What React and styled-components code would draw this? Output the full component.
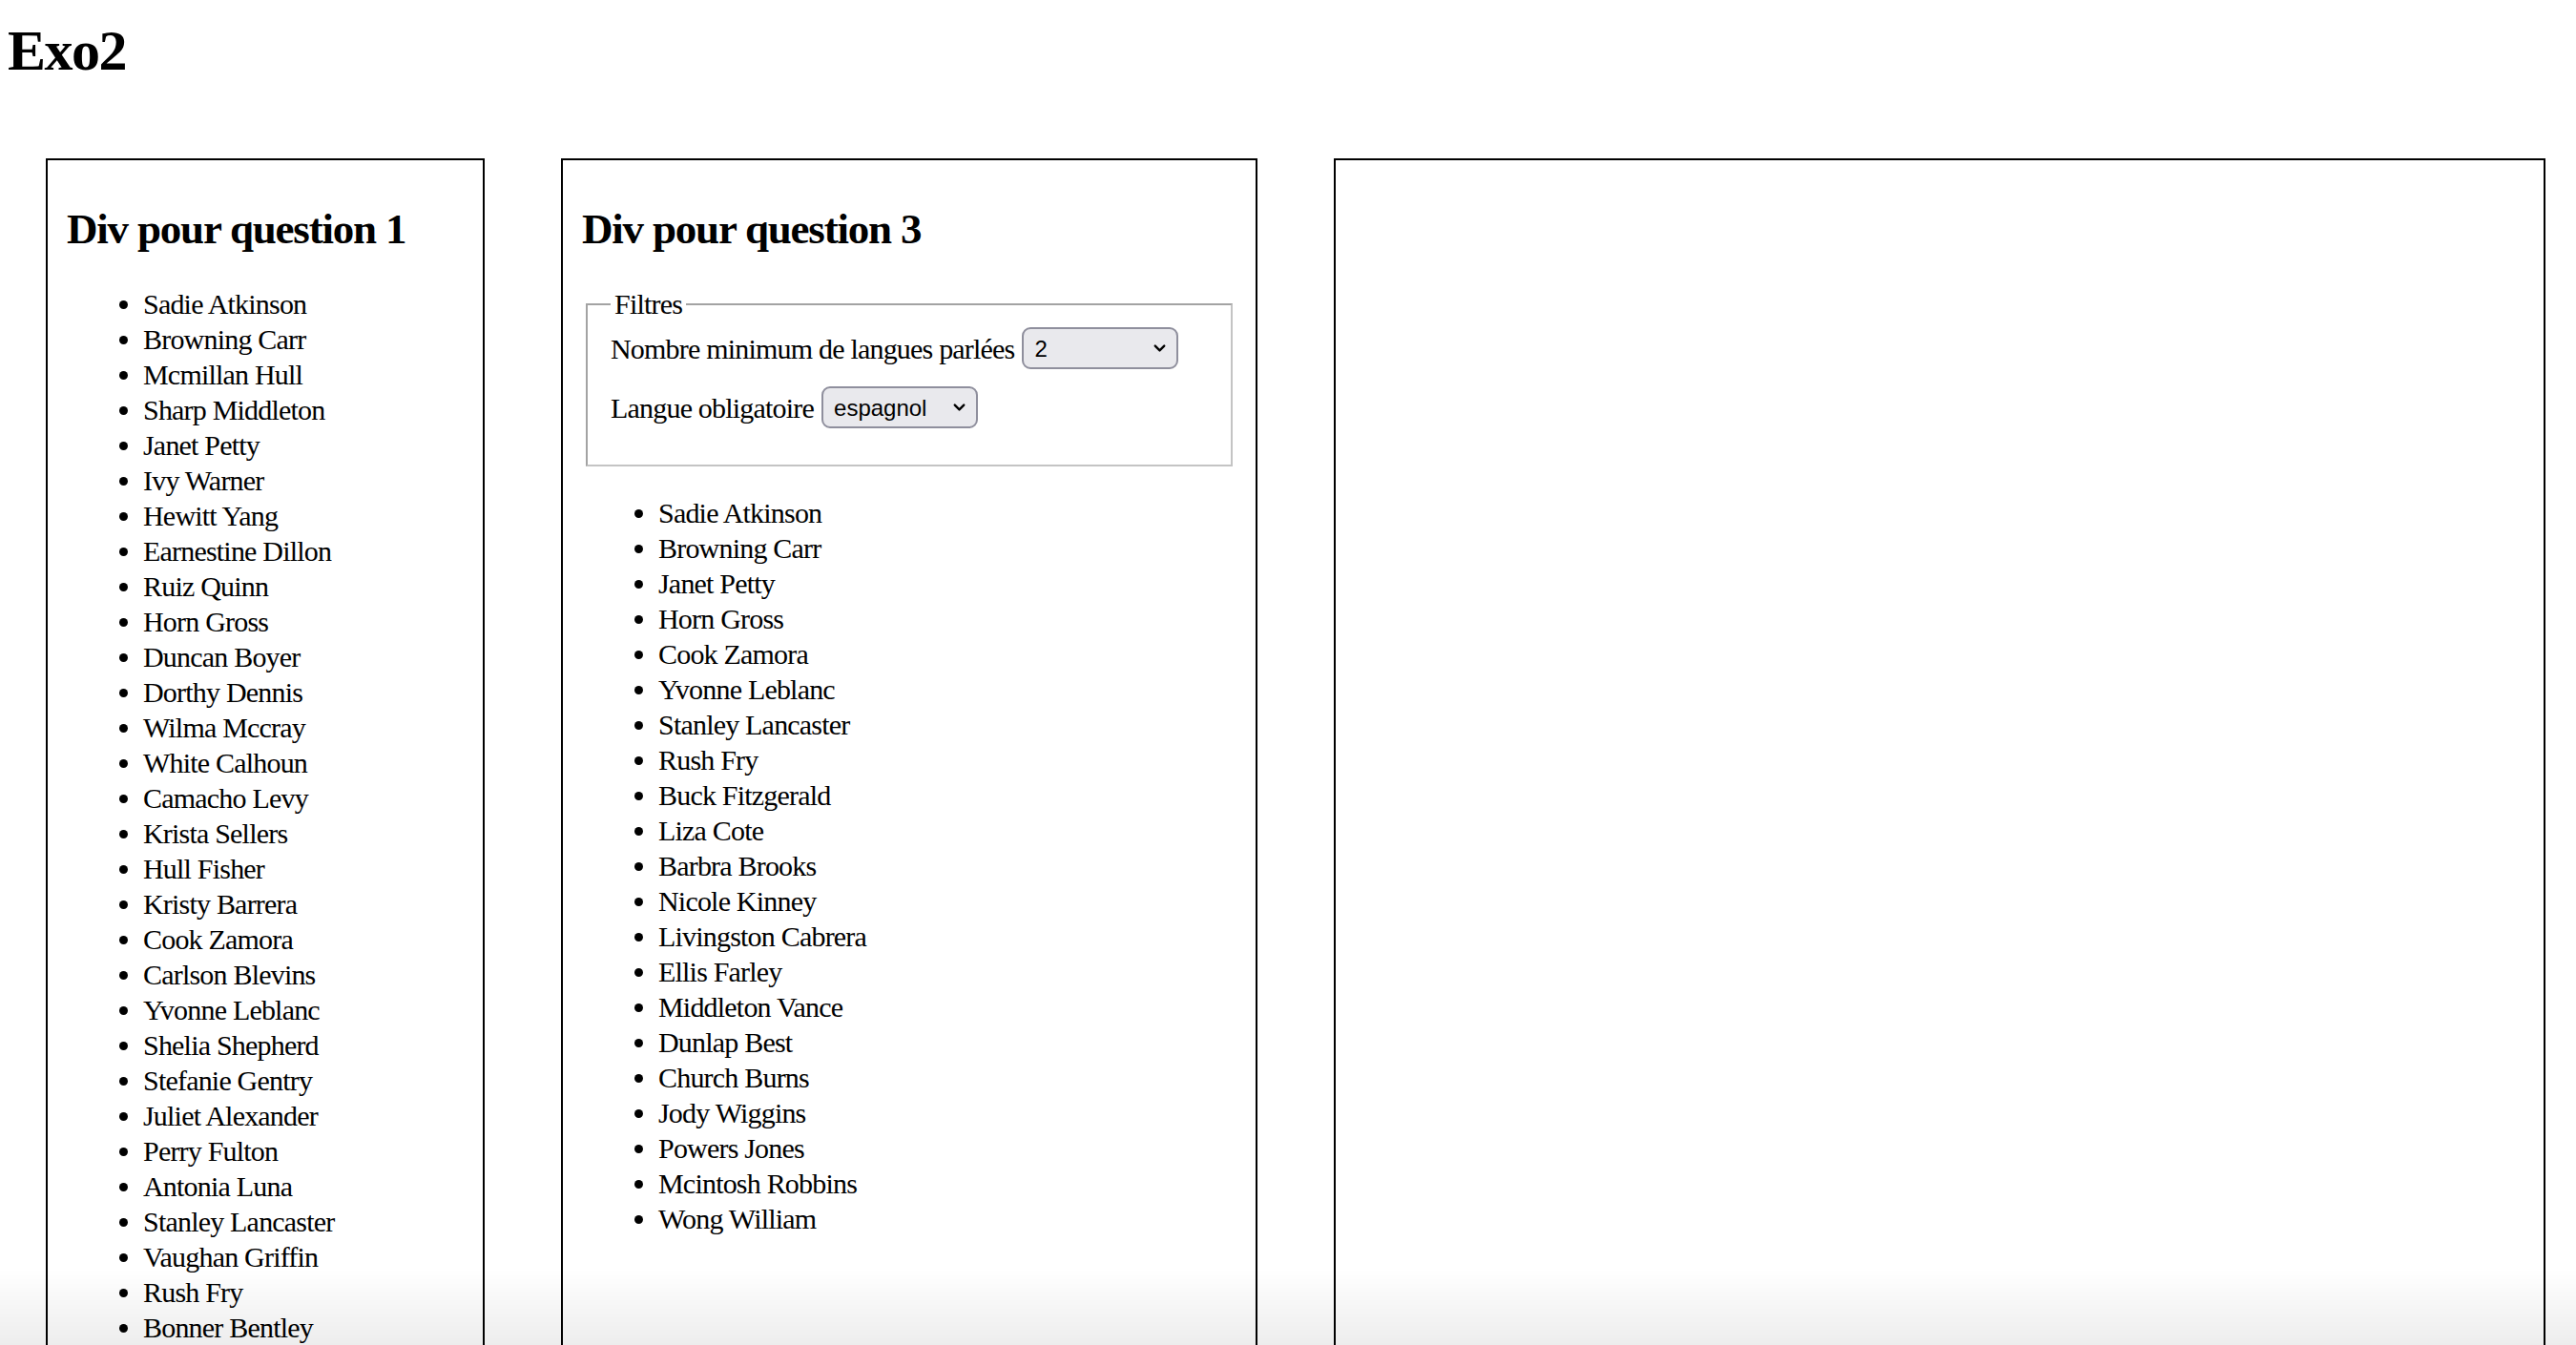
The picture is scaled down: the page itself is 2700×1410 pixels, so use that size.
import React from "react"
import styled, { createGlobalStyle } from "styled-components"
import { ChevronDown } from "lucide-react"

const GlobalStyle = createGlobalStyle`
  html, body {
    margin: 0;
    padding: 0;
    background: #fff;
    color: #000;
    font-family: "Liberation Serif", "Times New Roman", serif;
    font-size: 30px;
    letter-spacing: -0.8px;
    overflow: hidden;
  }
`

const Page = styled.div`
  height: 1410px;
  overflow: hidden;
`

const H1 = styled.h1`
  font-size: 60px;
  font-weight: bold;
  letter-spacing: -1.5px;
  margin: 16px 0 0 8px;
  line-height: 74px;
`

const Row = styled.div`
  display: flex;
  align-items: flex-start;
  gap: 80px;
  margin-top: 76px;
  padding-left: 48px;
`

const Box = styled.div`
  box-sizing: border-box;
  width: ${(p) => p.$width}px;
  min-height: 1400px;
  border: 2px solid #000;
  padding: 0 20px;
`

const H2 = styled.h2`
  font-size: 45px;
  font-weight: bold;
  letter-spacing: -1.2px;
  margin: 45px 0 32px;
  line-height: 55px;
`

const List = styled.ul`
  margin: 0;
  padding-left: 80px;
  list-style: disc;
  line-height: 37px;
`

const Fieldset = styled.fieldset`
  margin: 0 4px 30px;
  padding: 6px 24px 20px;
  border: 2px solid #c0c0c0;
  border-color: #a3a3a3 #c4c4c4 #c4c4c4 #a3a3a3;
`

const Legend = styled.legend`
  padding: 0 4px;
  line-height: 37px;
`

const Field = styled.div`
  display: flex;
  align-items: center;
  gap: 8px;
  margin-bottom: 18px;
  line-height: 37px;
  white-space: nowrap;
`

const SelectWrap = styled.div`
  position: relative;
  display: inline-flex;
  flex: none;
`

const Select = styled.select`
  appearance: none;
  box-sizing: border-box;
  width: ${(p) => p.$width}px;
  height: 44px;
  padding: 0 40px 0 11px;
  border: 2px solid #8f8f9d;
  border-radius: 9px;
  background: #e9e9ed;
  color: #000;
  font-family: "Liberation Sans", Arial, sans-serif;
  font-size: 24px;
  letter-spacing: 0;
`

const Chevron = styled(ChevronDown)`
  position: absolute;
  right: 10px;
  top: 50%;
  transform: translateY(-50%);
  pointer-events: none;
`

const BottomFade = styled.div`
  position: fixed;
  left: 0;
  right: 0;
  bottom: 0;
  height: 80px;
  background: linear-gradient(rgba(0, 0, 0, 0), rgba(0, 0, 0, 0.07));
  pointer-events: none;
`

const q1 = [
  "Sadie Atkinson", "Browning Carr", "Mcmillan Hull", "Sharp Middleton",
  "Janet Petty", "Ivy Warner", "Hewitt Yang", "Earnestine Dillon",
  "Ruiz Quinn", "Horn Gross", "Duncan Boyer", "Dorthy Dennis",
  "Wilma Mccray", "White Calhoun", "Camacho Levy", "Krista Sellers",
  "Hull Fisher", "Kristy Barrera", "Cook Zamora", "Carlson Blevins",
  "Yvonne Leblanc", "Shelia Shepherd", "Stefanie Gentry", "Juliet Alexander",
  "Perry Fulton", "Antonia Luna", "Stanley Lancaster", "Vaughan Griffin",
  "Rush Fry", "Bonner Bentley",
]

const q3 = [
  "Sadie Atkinson", "Browning Carr", "Janet Petty", "Horn Gross",
  "Cook Zamora", "Yvonne Leblanc", "Stanley Lancaster", "Rush Fry",
  "Buck Fitzgerald", "Liza Cote", "Barbra Brooks", "Nicole Kinney",
  "Livingston Cabrera", "Ellis Farley", "Middleton Vance", "Dunlap Best",
  "Church Burns", "Jody Wiggins", "Powers Jones", "Mcintosh Robbins",
  "Wong William",
]

const Dropdown = ({ width, value, options }) => (
  <SelectWrap>
    <Select $width={width} defaultValue={value}>
      {options.map((o) => (
        <option key={o} value={o}>{o}</option>
      ))}
    </Select>
    <Chevron size={19} strokeWidth={3} color="#000" />
  </SelectWrap>
)

const App = () => (
  <Page>
    <GlobalStyle />
    <H1>Exo2</H1>
    <Row>
      <Box $width={460}>
        <H2>Div pour question 1</H2>
        <List>
          {q1.map((n) => <li key={n}>{n}</li>)}
        </List>
      </Box>
      <Box $width={730}>
        <H2>Div pour question 3</H2>
        <Fieldset>
          <Legend>Filtres</Legend>
          <Field>
            Nombre minimum de langues parlées
            <Dropdown width={164} value="2" options={["1", "2", "3", "4"]} />
          </Field>
          <Field>
            Langue obligatoire
            <Dropdown width={164} value="espagnol" options={["anglais", "espagnol", "français"]} />
          </Field>
        </Fieldset>
        <List>
          {q3.map((n) => <li key={n}>{n}</li>)}
        </List>
      </Box>
      <Box $width={1270} />
    </Row>
    <BottomFade />
  </Page>
)

export default App
